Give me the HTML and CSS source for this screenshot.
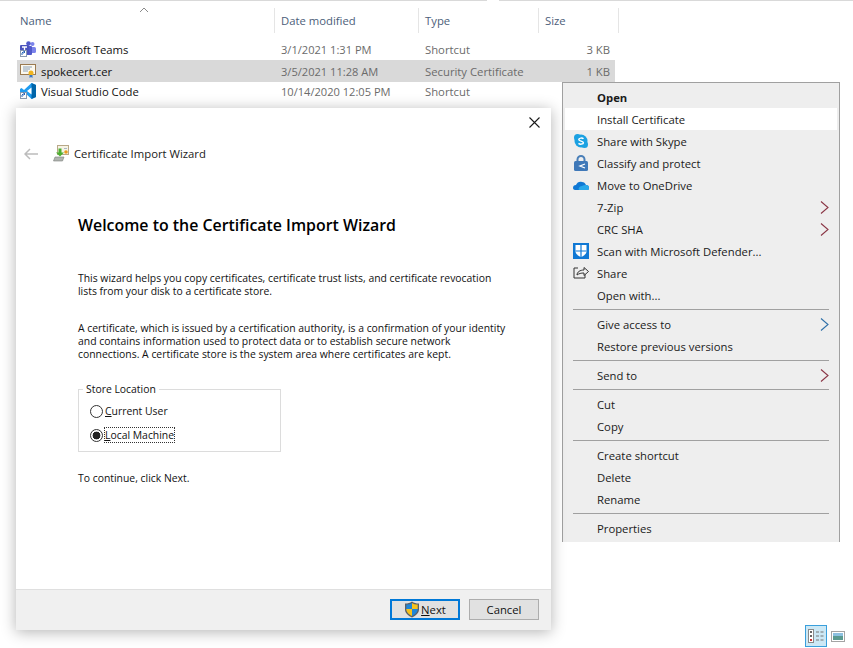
FILE: index.html
```html
<!DOCTYPE html>
<html lang="en">
<head>
<meta charset="utf-8">
<title>Certificate Import Wizard</title>
<link rel="stylesheet" href="styles.css">
</head>
<body>
<div class="desktop">
  <div class="topline"><span class="topline-a"></span><span class="topline-b"></span></div>
  <svg class="sort" width="10" height="6" viewBox="0 0 10 6"><path d="M1 5 5 1l4 4" fill="none" stroke="#8a8a8a"/></svg>

  <div class="headers">
    <div class="hcol c-name">Name</div>
    <div class="hcol c-date">Date modified</div>
    <div class="hcol c-type">Type</div>
    <div class="hcol c-size">Size</div>
  </div>

  <div class="rows">
    <div class="row">
      <div class="cell c-name name">
        <svg class="ficon" width="16" height="16" viewBox="0 0 16 16"><circle cx="12.500" cy="3" r="2" fill="#7b83eb"/><circle cx="8.500" cy="2.500" r="2.300" fill="#5059c9"/><rect x="10" y="6" width="6" height="6" rx="1.500" fill="#7b83eb"/><rect x="5" y="5" width="7" height="9" rx="1" fill="#5059c9"/><rect x="0" y="4" width="9" height="9" rx="1" fill="#4b53bc"/><path d="M2 6h5M4.500 6v5" stroke="#fff" stroke-width="1.300"/><rect x=".5" y="9.500" width="6" height="6" fill="#fff" stroke="#8a9ab0"/><path d="M2 14v-2l1-1h2M3.500 9.800 5 11l-1.500 1.300" fill="none" stroke="#1f5fb5"/></svg>
        <span>Microsoft Teams</span>
      </div>
      <div class="cell c-date">3/1/2021 1:31 PM</div>
      <div class="cell c-type">Shortcut</div>
      <div class="cell c-size">3 KB</div>
    </div>
    <div class="row selected">
      <div class="cell c-name name">
        <svg class="ficon" width="16" height="16" viewBox="0 0 16 16"><rect x=".5" y="1.500" width="15" height="10" fill="#fbf8ee" stroke="#9a7a50"/><path d="M3 4h9M3 6h7M3 8h5" stroke="#8aa0b8"/><circle cx="11" cy="10" r="2.500" fill="#f0b41e"/><path d="M9.500 12v3l1.500-1 1.500 1v-3" fill="#3b78c4"/></svg>
        <span>spokecert.cer</span>
      </div>
      <div class="cell c-date">3/5/2021 11:28 AM</div>
      <div class="cell c-type">Security Certificate</div>
      <div class="cell c-size">1 KB</div>
    </div>
    <div class="row tight">
      <div class="cell c-name name">
        <svg class="ficon" width="16" height="16" viewBox="0 0 16 16"><path d="M11.500 0 16 2v12l-4.500 2L4 9 1.500 11 0 10V6l1.500-1L4 7z" fill="#1f9cf0"/><path d="M11.500 0 16 2v12l-4.500 2z" fill="#0065a9"/><path d="M11.500 4.500v7L7 8z" fill="#fff"/><rect x=".5" y="9.500" width="6" height="6" fill="#fff" stroke="#8a9ab0"/><path d="M2 14v-2l1-1h2M3.500 9.800 5 11l-1.500 1.300" fill="none" stroke="#1f5fb5"/></svg>
        <span>Visual Studio Code</span>
      </div>
      <div class="cell c-date">10/14/2020 12:05 PM</div>
      <div class="cell c-type">Shortcut</div>
    </div>
  </div>

  <div class="menu">
    <div class="mi bold">Open</div>
    <div class="mi hot">Install Certificate</div>
    <div class="mi"><svg class="micon" width="16" height="16" viewBox="0 0 16 16"><circle cx="8" cy="8" r="6.500" fill="#1ba1e2"/><circle cx="4.500" cy="4.500" r="3.500" fill="#1ba1e2"/><circle cx="11.500" cy="11.500" r="3.500" fill="#1ba1e2"/><path d="M10.500 5.700C9.500 4.800 5.800 4.800 5.800 6.500c0 2 4.600 1.200 4.600 3.300 0 1.700-3.700 1.600-4.900.6" fill="none" stroke="#fff" stroke-width="1.500"/></svg>Share with Skype</div>
    <div class="mi"><svg class="micon" width="16" height="16" viewBox="0 0 16 16"><path d="M4.500 7V4.500a3.500 3.500 0 0 1 7 0V7" fill="none" stroke="#4a7fb8" stroke-width="2"/><rect x="1" y="6" width="14" height="10" rx="1.500" fill="#3f78b8"/><path d="M12 9 7 11l5 2" fill="none" stroke="#fff" stroke-width="1.300"/></svg>Classify and protect</div>
    <div class="mi"><svg class="micon" width="16" height="16" viewBox="0 0 16 16"><path d="M0 11c0-2 1-3 3-3 1-3 4-4 6-3 2 0 3 1 4 3 2 0 3 1 3 3s-1 2-2 2H2c-1 0-2-1-2-2z" fill="#0f78d4"/><path d="M6 13c-1-1 0-4 3-4 1-1 3-1 4-1 2 0 3 1 3 3s-1 2-2 2z" fill="#28a8ea"/></svg>Move to OneDrive</div>
    <div class="mi">7-Zip<svg class="arrow" width="9" height="13" viewBox="0 0 9 13"><path d="m1 .5 7 6-7 6" fill="none" stroke="#8a3545" stroke-width="1.100"/></svg></div>
    <div class="mi">CRC SHA<svg class="arrow" width="9" height="13" viewBox="0 0 9 13"><path d="m1 .5 7 6-7 6" fill="none" stroke="#8a3545" stroke-width="1.100"/></svg></div>
    <div class="mi"><svg class="micon" width="16" height="16" viewBox="0 0 16 16"><rect width="16" height="16" fill="#0f78d4"/><path d="M2.500 2h11v6.500c0 2.500-2.700 4.300-5.500 5.500-2.800-1.200-5.500-3-5.500-5.500z" fill="#fff"/><path d="M8 2v12M2.500 8h11" stroke="#0f78d4" stroke-width="1.200"/></svg>Scan with Microsoft Defender...</div>
    <div class="mi"><svg class="micon" width="16" height="16" viewBox="0 0 16 16"><path d="M5 3H1v10h11V9" fill="none" stroke="#333"/><path d="M4 10c0-3 3-5 7-5V2.500l4.500 4-4.500 4V8c-3 0-5 .5-7 2z" fill="#eee" stroke="#333"/></svg>Share</div>
    <div class="mi">Open with...</div>
    <div class="sep"></div>
    <div class="mi">Give access to<svg class="arrow" width="9" height="13" viewBox="0 0 9 13"><path d="m1 .5 7 6-7 6" fill="none" stroke="#2e6fa8" stroke-width="1.100"/></svg></div>
    <div class="mi">Restore previous versions</div>
    <div class="sep"></div>
    <div class="mi">Send to<svg class="arrow" width="9" height="13" viewBox="0 0 9 13"><path d="m1 .5 7 6-7 6" fill="none" stroke="#8a3545" stroke-width="1.100"/></svg></div>
    <div class="sep"></div>
    <div class="mi">Cut</div>
    <div class="mi">Copy</div>
    <div class="sep"></div>
    <div class="mi">Create shortcut</div>
    <div class="mi">Delete</div>
    <div class="mi">Rename</div>
    <div class="sep"></div>
    <div class="mi">Properties</div>
  </div>

  <div class="dialog">
    <div class="close-row">
      <svg width="11" height="11" viewBox="0 0 11 11"><path d="m.5.500 10 10M10.500.500l-10 10" stroke="#1a1a1a" stroke-width="1.100"/></svg>
    </div>
    <div class="title-row">
      <svg class="back" width="14" height="12" viewBox="0 0 14 12"><path d="M6 1 1 6l5 5M1 6h13" fill="none" stroke="#bcbcbc" stroke-width="1.500"/></svg>
      <svg class="wiz" width="16" height="17" viewBox="0 0 16 17"><rect x="4.500" y=".5" width="11" height="9" fill="#f7f3e4" stroke="#b8a888"/><path d="M11 3.500h3" stroke="#a8b8c8"/><circle cx="13" cy="7" r="1.800" fill="#e89a1e"/><path d="M5.500 3.500h3v4H11l-4 4-4-4h2.500z" fill="#4caf30"/><path d="M2 12h9l-1.500 4H.5z" fill="#b0b4b0" stroke="#7c807c" stroke-width=".6"/></svg>
      <span class="wiz-title">Certificate Import Wizard</span>
    </div>
    <div class="content">
      <h1 class="welcome">Welcome to the Certificate Import Wizard</h1>
      <p class="para first">This wizard helps you copy certificates, certificate trust lists, and certificate revocation lists from your disk to a certificate store.</p>
      <p class="para second">A certificate, which is issued by a certification authority, is a confirmation of your identity and contains information used to protect data or to establish secure network connections. A certificate store is the system area where certificates are kept.</p>
      <div class="group">
        <span class="legend">Store Location</span>
        <div class="radio"><span class="dot"></span><span><u>C</u>urrent User</span></div>
        <div class="radio on"><span class="dot"></span><span class="focus"><u>L</u>ocal Machine</span></div>
      </div>
      <p class="para cont">To continue, click Next.</p>
    </div>
    <div class="footer">
      <div class="btn primary">
        <svg width="16" height="17" viewBox="0 0 16 17"><path d="M8 .5c2 1.500 4 2 7 2v6c0 3.500-3 6-7 8-4-2-7-4.500-7-8v-6c3 0 5-.5 7-2z" fill="#5a6068"/><path d="M8 2v6H2.300V3.500C4.500 3.500 6.500 3 8 2z" fill="#1f86d8"/><path d="M8 2c1.500 1 3.500 1.500 5.700 1.500V8H8z" fill="#f6c21c"/><path d="M2.300 8H8v7c-3-1.500-5.700-3.500-5.700-7z" fill="#f6c21c"/><path d="M8 8h5.700c0 3.500-2.700 5.500-5.700 7z" fill="#1f86d8"/></svg>
        <span><u>N</u>ext</span>
      </div>
      <div class="btn">Cancel</div>
    </div>
  </div>

  <div class="views">
    <div class="view active">
      <svg width="16" height="14" viewBox="0 0 16 14"><rect x=".5" y=".5" width="5" height="13" fill="#fff" stroke="#8a8a8a"/><rect x="2" y="2" width="2" height="2" fill="#666"/><rect x="2" y="6" width="2" height="2" fill="#666"/><rect x="2" y="10" width="2" height="2" fill="#d03030"/><path d="M8 3h3M12.500 3h3M8 7h3M12.500 7h3M8 11h3M12.500 11h3" stroke="#777"/></svg>
    </div>
    <svg class="view-thumb" width="14" height="11" viewBox="0 0 14 11"><rect x=".5" y=".5" width="13" height="10" fill="#fff" stroke="#a4a4a4"/><rect x="2" y="2" width="10" height="3" fill="#8cc0e0"/><rect x="2" y="5" width="10" height="4" fill="#5a9a90"/></svg>
  </div>
</div>
</body>
</html>
```

FILE: styles.css
```css
* { box-sizing: border-box; }
html, body { margin: 0; padding: 0; background: #fff; }
body {
  font-family: "Open Sans", "Noto Sans", "Liberation Sans", sans-serif;
  font-size: 11.3px;
  color: #1a1a1a;
}
.desktop { position: relative; width: 853px; height: 648px; overflow: hidden; }

.topline { display: flex; height: 1px; }
.topline-a { flex: none; width: 487px; background: #d9d9d9; }
.topline-b { flex: none; width: 354px; margin-left: 12px; background: #d9d9d9; }
.sort { position: absolute; left: 139px; top: 7px; }

.headers { display: flex; height: 25px; margin-top: 7px; padding-left: 13px; color: #4c607a; }
.hcol { display: flex; align-items: center; padding-left: 7px; border-right: 1px solid #e5e5e5; }
.headers .c-name { width: 262px; }
.headers .c-date { width: 144px; padding-left: 6px; }
.headers .c-type { width: 120px; padding-left: 6px; }
.headers .c-size { width: 80px; padding-left: 6px; }

.rows { margin: 5px 0 0 17px; width: 598px; }
.row { display: flex; height: 22px; align-items: center; color: #6b6b6b; }
.row.selected { background: #d9d9d9; }
.row.tight { margin-top: -2px; }
.row .cell { flex: none; }
.row .c-name { width: 258px; padding-left: 3px; }
.row .c-date { width: 144px; padding-left: 6px; font-size: 11.1px; }
.row .c-type { width: 120px; padding-left: 6px; }
.row .c-size { width: 71px; text-align: right; }
.name { display: flex; align-items: center; gap: 5px; color: #111; }
.ficon { flex: none; }

.menu {
  position: absolute; left: 562px; top: 82px; width: 278px; height: 460px;
  padding: 3px 2px 0; background: #eee;
  border: 1px solid #a0a0a0; border-bottom: 0;
}
.mi { position: relative; height: 22px; padding-left: 32px; display: flex; align-items: center; color: #1a1a1a; }
.bold { font-weight: 700; }
.hot { background: #fff; }
.micon { position: absolute; left: 8px; top: 3px; }
.arrow { position: absolute; right: 8px; top: 5px; }
.sep { height: 1px; margin: 3px 8px; background: #a0a0a0; }

.dialog {
  position: absolute; left: 16px; top: 108px; width: 535px; height: 522px;
  display: flex; flex-direction: column; background: #fff;
  box-shadow: 0 2px 14px rgba(0, 0, 0, .3);
}
.close-row { display: flex; justify-content: flex-end; padding: 9px 11px 0 0; height: 30px; }
.title-row { display: flex; align-items: center; height: 31px; padding-left: 8px; }
.back { margin-right: 15px; }
.wiz { margin-right: 5px; }
.wiz-title { color: #1a1a1a; font-size: 11.3px; }
.content { flex: 1; padding: 0 44px 0 62px; color: #111; }
.welcome { margin: 44px 0 0; font-size: 15.9px; line-height: 24px; font-weight: 600; color: #000; }
.para { margin: 0; font-size: 10.4px; line-height: 13px; }
.first { margin-top: 35px; }
.second { margin-top: 24px; }
.group {
  position: relative; width: 203px; height: 63px; margin-top: 28px;
  padding: 11px 0 0 11px;
  border: 1px solid #dcdcdc;
}
.legend { position: absolute; left: 4px; top: -7px; padding: 0 3px; background: #fff; font-size: 10.4px; line-height: 13px; }
.radio { display: flex; align-items: center; height: 20px; margin-bottom: 4px; font-size: 10.4px; }
.dot { flex: none; width: 13px; height: 13px; margin-right: 2px; border: 1px solid #333; border-radius: 50%; background: #fff; }
.on .dot { background: radial-gradient(circle, #222 0 3.600px, #fff 4.200px); }
.focus { outline: 1px dotted #333; }
.cont { margin-top: 20px; }
.footer {
  display: flex; justify-content: flex-end; gap: 9px;
  height: 41px; padding: 9px 12px 0 0;
  background: #f0f0f0; border-top: 1px solid #dfdfdf;
}
.btn {
  display: flex; align-items: center; justify-content: center; gap: 1px;
  width: 70px; height: 21px; background: #e1e1e1;
  border: 1px solid #adadad; font-size: 11.3px; color: #111;
}
.primary { border: 2px solid #0078d7; }

.views { position: absolute; left: 805px; top: 625px; display: flex; align-items: center; gap: 4px; }
.view { display: flex; align-items: center; justify-content: center; width: 22px; height: 22px; background: #cce8f5; border: 1px solid #3a9fdc; }
```
